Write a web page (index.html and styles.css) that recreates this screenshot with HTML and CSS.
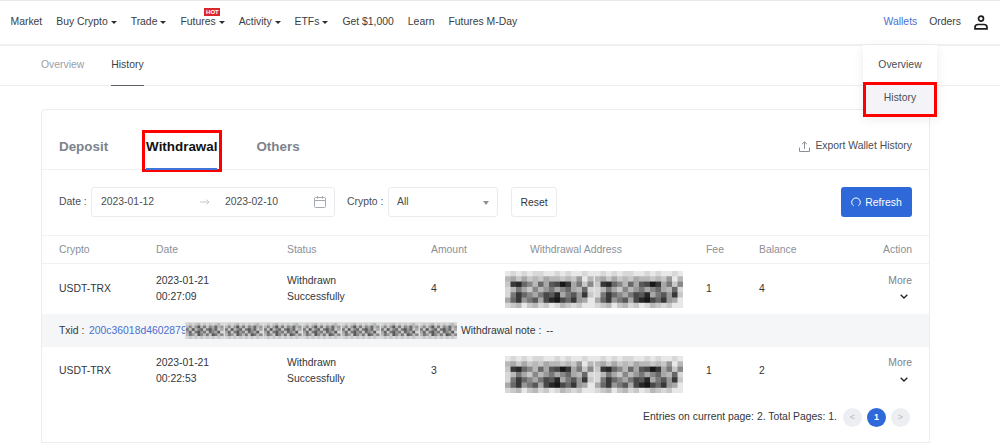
FILE: index.html
```html
<!DOCTYPE html>
<html lang="en">
<head>
<meta charset="utf-8">
<title>Wallet History</title>
<link rel="stylesheet" href="styles.css">
</head>
<body>
<header class="topbar">
  <nav class="mainnav">
    <a>Market</a>
    <a>Buy Crypto<i class="caret"></i></a>
    <a>Trade<i class="caret"></i></a>
    <a>Futures<i class="caret"></i><span class="hot">HOT</span></a>
    <a>Activity<i class="caret"></i></a>
    <a>ETFs<i class="caret"></i></a>
    <a>Get $1,000</a>
    <a>Learn</a>
    <a>Futures M-Day</a>
  </nav>
  <div class="usernav">
    <a class="active">Wallets</a>
    <a>Orders</a>
    <svg class="user" width="14" height="15" viewBox="0 0 14 15" fill="none" stroke="#1c1c1c" stroke-width="1.700"><circle cx="7" cy="3.600" r="2.500"/><path d="M1 13.900v-1.500c0-1.700 1.400-2.900 3-2.900h6c1.600 0 3 1.200 3 2.900v1.500z"/></svg>
  </div>
</header>

<div class="subnav">
  <a>Overview</a>
  <a class="current">History</a>
</div>

<div class="menu">
  <div class="menu-item">Overview</div>
  <div class="menu-item selected">History</div>
</div>

<main class="page">
  <section class="card">
    <div class="tabs">
      <a class="tab">Deposit</a>
      <a class="tab on">Withdrawal</a>
      <a class="tab">Others</a>
      <a class="export">
        <svg width="11" height="11" viewBox="0 0 11 11" fill="none" stroke="#8a9099" stroke-width="1"><path d="M.5 6.500v4h10v-4M5.500 8V1M3 3.200 5.500.8 8 3.200"/></svg>
        Export Wallet History
      </a>
    </div>

    <div class="filters">
      <label class="flabel date">Date :</label>
      <div class="field range">
        <span class="d1">2023-01-12</span>
        <svg class="arrow" width="10" height="8" viewBox="0 0 10 8" fill="none" stroke="#c4c8ce"><path d="M0 4h9M6.500 1.500 9 4 6.500 6.500"/></svg>
        <span class="d2">2023-02-10</span>
        <svg class="cal" width="12" height="12" viewBox="0 0 12 12" fill="none" stroke="#a4a9b1"><rect x=".5" y="1.500" width="11" height="10" rx="1"/><path d="M.5 4.500h11M3.500 0v2.500M8.500 0v2.500"/></svg>
      </div>
      <label class="flabel crypto">Crypto :</label>
      <div class="field select">All<i class="sel-caret"></i></div>
      <button class="reset">Reset</button>
      <button class="refresh">
        <svg width="10" height="10" viewBox="0 0 10 10" fill="none" stroke="#fff" stroke-width="1"><path d="M2.600 8.800A4.300 4.300 0 1 1 7.400 8.800"/></svg>
        Refresh
      </button>
    </div>

    <div class="table">
      <div class="row head">
        <div class="c-crypto">Crypto</div><div class="c-date">Date</div><div class="c-status">Status</div><div class="c-amount">Amount</div><div class="c-addr">Withdrawal Address</div><div class="c-fee">Fee</div><div class="c-bal">Balance</div><div class="c-act">Action</div>
      </div>
      <div class="row body">
        <div class="c-crypto">USDT-TRX</div><div class="c-date">2023-01-21<br>00:27:09</div><div class="c-status">Withdrawn<br>Successfully</div><div class="c-amount">4</div>
        <div class="c-addr"><canvas class="mosaic" width="178" height="37"></canvas></div>
        <div class="c-fee">1</div><div class="c-bal">4</div>
        <div class="c-act"><span class="more">More</span><svg class="chev" width="8" height="5" viewBox="0 0 8 5" fill="none" stroke="#222" stroke-width="1.300"><path d="M.7.700 4 4 7.300.700"/></svg></div>
      </div>
      <div class="txid">
        <span class="t-label">Txid :</span>
        <a class="hash">200c36018d4602879</a>
        <canvas class="mosaic-small" width="272" height="17"></canvas>
        <span class="note">Withdrawal note :&nbsp;&#8201;--</span>
      </div>
      <div class="row body last">
        <div class="c-crypto">USDT-TRX</div><div class="c-date">2023-01-21<br>00:22:53</div><div class="c-status">Withdrawn<br>Successfully</div><div class="c-amount">3</div>
        <div class="c-addr"><canvas class="mosaic" width="178" height="37"></canvas></div>
        <div class="c-fee">1</div><div class="c-bal">2</div>
        <div class="c-act"><span class="more">More</span><svg class="chev" width="8" height="5" viewBox="0 0 8 5" fill="none" stroke="#222" stroke-width="1.300"><path d="M.7.700 4 4 7.300.700"/></svg></div>
      </div>
    </div>

    <div class="pager">
      <span class="entries">Entries on current page: 2. Total Pages: 1.</span>
      <span class="pg">&lt;</span>
      <span class="pg now">1</span>
      <span class="pg">&gt;</span>
    </div>
  </section>
</main>
<script src="mosaic.js"></script>
</body>
</html>
```
FILE: styles.css
```css
* { box-sizing: border-box; }
html, body { margin: 0; padding: 0; }
body {
  width: 1000px; height: 443px; overflow: hidden; position: relative;
  background: #fff; color: #30343a;
  font-family: "Liberation Sans", Arial, sans-serif; font-size: 10.4px; line-height: 16px;
}
.topbar {
  height: 46px; padding: 0 12px 1px 10.500px;
  border-top: 1px solid #e9e9e9; border-bottom: 2px solid #f0f0f1;
  display: flex; align-items: center; justify-content: space-between;
}
.mainnav { display: flex; gap: 14px; align-items: center; color: #3a3d42; }
.mainnav a { display: inline-flex; align-items: center; position: relative; }
.caret { display: inline-block; margin-left: 3px; margin-top: 1px; border: 3px solid transparent; border-top: 3.500px solid #2c2f33; border-bottom: 0; width: 0; height: 0; }
.hot {
  position: absolute; left: 24px; top: -6px; width: 16px; height: 8px;
  background: #d9272e; color: #fff; font-size: 6px; line-height: 8px; font-weight: 700; text-align: center;
}
.usernav { display: flex; align-items: center; gap: 12px; color: #3a3d42; }
.usernav .active { color: #4a6fd0; }
.usernav .user { margin-left: 1px; }
.subnav {
  height: 40px; padding: 0 0 1px 41px; border-bottom: 1px solid #ececee;
  display: flex; gap: 27px; align-items: stretch; color: #9aa0a8;
}
.subnav a { display: flex; align-items: center; }
.subnav .current { color: #3b3f45; border-bottom: 1px solid #5d6068; margin-bottom: -2px; padding-bottom: 1px; }
.menu {
  position: absolute; left: 863px; top: 45px; width: 74px; background: #fff;
  box-shadow: 0 2px 10px rgba(0,0,0,.08); z-index: 5; text-align: center; color: #4a4e55;
}
.menu-item { height: 37px; line-height: 39px; }
.menu-item.selected { height: 35px; line-height: 25px; background: #f4f4f8; border: 3px solid #f00; }
.page { padding: 23px 70px 0 41px; }
.card { border: 1px solid #ececee; border-radius: 4px 4px 0 0; height: 334px; }
.tabs { height: 60px; padding: 0 17px; display: flex; align-items: flex-start; border-bottom: 1px solid #f1f1f3; }
.tab { font-size: 13.400px; font-weight: 700; color: #7c838c; line-height: 20px; margin-top: 27px; margin-right: 38px; }
.tab.on { color: #111; position: relative; margin-right: 39px; }
.tab.on::before {
  content: ""; position: absolute; left: -4px; right: -5px; top: -7px; height: 36px; border: 3px solid #f00;
}
.tab.on::after { content: ""; position: absolute; left: 0; right: 0; top: 31px; height: 2px; background: #3f74db; }
.export { margin-left: auto; margin-top: 28px; display: flex; align-items: center; gap: 5px; color: #4a4e55; }
.filters { height: 65px; padding: 0 17px 1px; display: flex; align-items: center; color: #4a4e55; }
.flabel { flex: none; }
.flabel.date { width: 32px; }
.flabel.crypto { width: 41px; margin-left: 12px; }
.field { height: 30px; border: 1px solid #e9ebee; border-radius: 3px; display: flex; align-items: center; }
.range { width: 244px; padding-left: 9px; }
.d1 { width: 99px; }
.arrow { margin-right: 15px; }
.d2 { width: 89px; }
.select { width: 110px; padding: 0 8px; justify-content: space-between; }
.sel-caret { width: 0; height: 0; border: 3px solid transparent; border-top: 4px solid #8b9099; border-bottom: 0; margin-top: 1px; }
.reset { margin-left: 13px; width: 46px; height: 30px; background: #fff; border: 1px solid #e9ebee; border-radius: 3px; font: 10.400px "Liberation Sans", Arial, sans-serif; color: #33363b; padding: 0; }
.refresh { margin-left: auto; width: 71px; height: 30px; background: #2f68d8; border: 0; border-radius: 3px; color: #fff; font: 10.400px "Liberation Sans", Arial, sans-serif; display: flex; align-items: center; justify-content: center; gap: 4px; padding: 0; }
.table { border-top: 1px solid #f2f2f4; }
.row { display: flex; padding: 0 17px; align-items: center; }
.row.head { height: 28px; color: #8b9098; border-bottom: 1px solid #f0f0f2; }
.row.body { height: 50px; color: #33363b; }
.row.last { height: 48px; }
.c-crypto { width: 97px; }
.c-date { width: 131px; }
.c-status { width: 144px; }
.c-amount { width: 74px; }
.c-addr { width: 201px; }
.head .c-addr { padding-left: 25px; }
.c-fee { width: 53px; }
.c-bal { width: 50px; }
.c-act { flex: 1; display: flex; flex-direction: column; align-items: flex-end; }
.more { color: #7e838b; }
.chev { margin: 5px 4px 7px 0; display: block; }
.last .chev { margin: 6px 4px 6px 0; }
.mosaic { display: block; width: 178px; height: 37px; filter: blur(.45px); }
.last .mosaic { margin-top: 6px; }
.txid { height: 33px; background: #f5f6f8; padding-left: 17px; display: flex; align-items: center; color: #33363b; }
.t-label { width: 30px; }
.hash { color: #4a6fd0; width: 96px; white-space: nowrap; }
.mosaic-small { width: 272px; height: 17px; margin-right: 4px; display: block; filter: blur(.4px); }
.pager { display: flex; align-items: center; justify-content: flex-end; padding-right: 19px; color: #33363b; height: 44px; }
.entries { margin-right: 1px; }
.pg { width: 19px; height: 19px; border-radius: 50%; background: #eceef1; color: #b4b8be; font-size: 9px; line-height: 19px; text-align: center; margin-left: 5px; }
.pg.now { background: #2f68d8; color: #fff; font-weight: 700; }
```
FILE: mosaic.js
```js
var BIG = [
  'edededdeededeede',
  'bacacbcabbcbc9eb',
  'c3268b6a5413a7c8',
  'db7ac8b97a86ab6d',
  'd7368a7452a7593c',
  'a63975a4214639ae',
  'dcbecbdcedbcdcee'
];
var SMALL = [
  'dcdcbdcdcdcbd',
  'b8c95b7c8a6b9',
  '7c5b86c7596ca',
  'a6c7597c68a5d',
  'b79c58b7c57b8',
  'dcdcdcdcdcdcd'
];
function shade(ch) {
  var v = parseInt(ch, 16) * 16 + 8;
  return 'rgb(' + v + ',' + v + ',' + v + ')';
}
function paint(x, grid, ox, oy, w, h) {
  grid.forEach(function (line, j) {
    line.split('').forEach(function (ch, i) {
      x.fillStyle = shade(ch);
      x.fillRect(ox + i * w, oy + j * h, w + .5, h + .5);
    });
  });
}
document.querySelectorAll('.mosaic').forEach(function (c) {
  var x = c.getContext('2d');
  x.fillStyle = '#e6e6e6';
  x.fillRect(0, 0, c.width, c.height);
  paint(x, BIG, 0, 0, 5.5, 5.3);
  paint(x, BIG, 90, 0, 5.5, 5.3);
});
document.querySelectorAll('.mosaic-small').forEach(function (c) {
  var x = c.getContext('2d');
  x.fillStyle = '#dedfe0';
  x.fillRect(0, 0, c.width, c.height);
  for (var n = 0; n < 7; n++) paint(x, SMALL, n * 39 + 1, 1, 2.85, 2.6);
});
```
